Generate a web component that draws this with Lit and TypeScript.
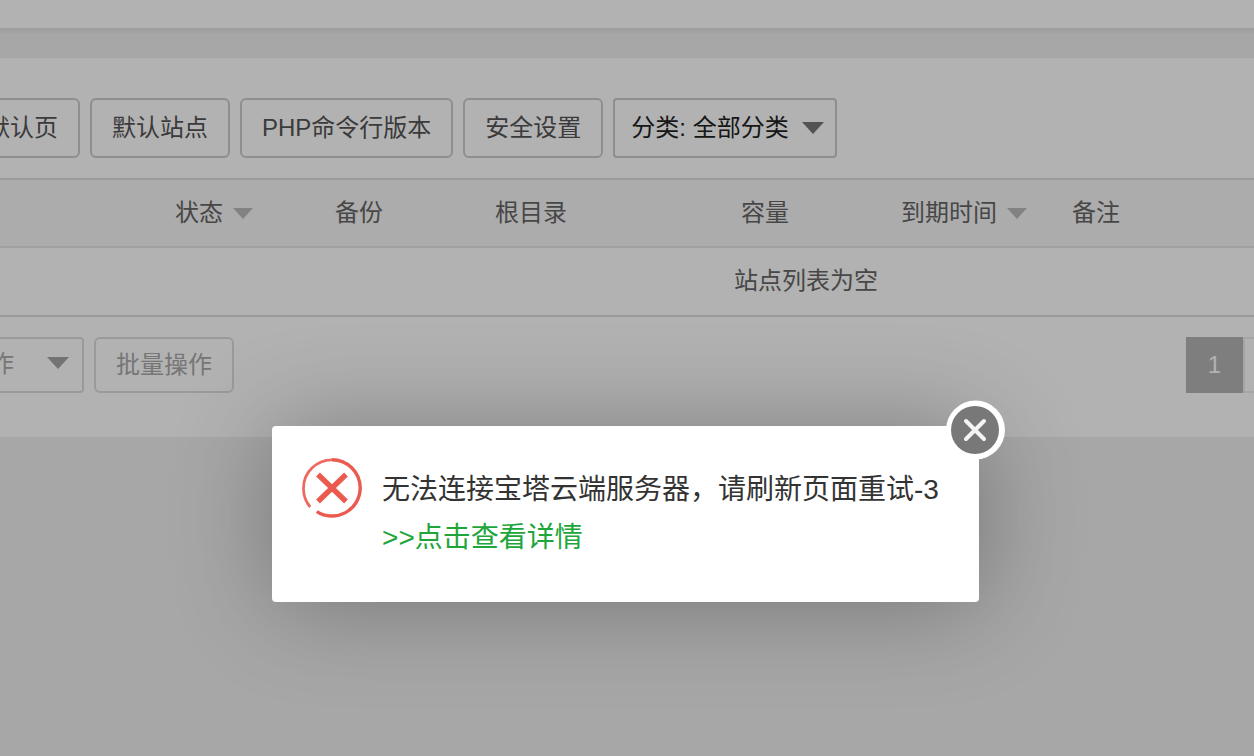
import { LitElement, html, css, nothing } from "lit";
import { customElement, property, state } from "lit/decorators.js";

const triangle = (cls: string) => html`
  <svg class=${cls} viewBox="0 0 22 12" aria-hidden="true">
    <path d="M0 0H22L11 12Z" fill="currentColor"></path>
  </svg>
`;

interface Column {
  label: string;
  cls: string;
  sortable?: boolean;
}

const COLUMNS: Column[] = [
  { label: "", cls: "lead" },
  { label: "状态", cls: "normal", sortable: true },
  { label: "备份", cls: "normal" },
  { label: "根目录", cls: "path" },
  { label: "容量", cls: "normal" },
  { label: "到期时间", cls: "expiry", sortable: true },
  { label: "备注", cls: "rest" },
];

@customElement("select-box")
class SelectBox extends LitElement {
  @property() label = "";
  @property() option = "";
  @property({ type: Boolean }) disabled = false;

  static styles = css`
    :host {
      display: block;
      position: relative;
      flex: none;
    }
    .select {
      display: block;
      appearance: none;
      box-sizing: border-box;
      width: 100%;
      height: 100%;
      margin: 0;
      padding: 0 44px 0 16px;
      border: 2px solid #ccc;
      border-radius: 4px;
      background: #fff;
      color: #222;
      font: inherit;
      opacity: 1;
    }
    .select:disabled {
      padding: 0 40px 3px 18px;
      border-color: #ddd;
      color: #aaa;
    }
    .arrow {
      position: absolute;
      top: 50%;
      right: 13px;
      width: 22px;
      height: 12px;
      margin-top: -6px;
      color: #777;
      pointer-events: none;
    }
    .muted {
      right: 15px;
      margin-top: -8px;
      color: #a5a5a5;
    }
  `;

  render() {
    return html`
      <select class="select" aria-label=${this.label} ?disabled=${this.disabled}>
        <option>${this.option}</option>
      </select>
      ${triangle(this.disabled ? "arrow muted" : "arrow")}
    `;
  }
}

@customElement("site-table")
class SiteTable extends LitElement {
  static styles = css`
    :host {
      display: block;
    }
    .table {
      width: calc(100% + 358px);
      border-collapse: separate;
      border-spacing: 0;
      table-layout: fixed;
      border-top: 2px solid #ddd;
    }
    .th {
      height: 66px;
      padding: 0 0 0 16px;
      border-bottom: 2px solid #e6e6e6;
      background: #f6f6f6;
      color: #666;
      font-weight: 400;
      text-align: left;
      white-space: nowrap;
    }
    .lead {
      width: 143px;
    }
    .normal {
      width: 144px;
    }
    .path {
      width: 230px;
    }
    .expiry {
      width: 155px;
    }
    .sort {
      display: inline-flex;
      align-items: center;
      gap: 10px;
      padding: 0;
      border: 0;
      background: none;
      color: inherit;
      font: inherit;
    }
    .sort-arrow {
      width: 20px;
      height: 11px;
      color: #bbb;
    }
    .empty {
      height: 65px;
      padding: 0 0 2px;
      border-bottom: 2px solid #ddd;
      color: #666;
      text-align: center;
    }
  `;

  render() {
    return html`
      <table class="table">
        <thead>
          <tr>
            ${COLUMNS.map(
              (c) => html`<th class="th ${c.cls}" scope="col">
                ${c.sortable
                  ? html`<button class="sort" type="button">${c.label}${triangle("sort-arrow")}</button>`
                  : c.label}
              </th>`
            )}
          </tr>
        </thead>
        <tbody>
          <tr>
            <td class="empty" colspan=${COLUMNS.length}>站点列表为空</td>
          </tr>
        </tbody>
      </table>
    `;
  }
}

@customElement("error-dialog")
class ErrorDialog extends LitElement {
  static styles = css`
    :host {
      display: block;
      position: relative;
      box-sizing: border-box;
      padding: 40px 40px 40px 110px;
      border-radius: 4px;
      background: #fff;
      box-shadow: 2px 2px 100px rgba(0, 0, 0, 0.3);
      color: #333;
      font-size: 28px;
      line-height: 48px;
    }
    .icon {
      position: absolute;
      top: 32px;
      left: 30px;
      width: 60px;
      height: 60px;
    }
    .message {
      margin: 0;
    }
    .link {
      color: #20a53a;
      text-decoration: none;
    }
    .close {
      position: absolute;
      top: -26px;
      right: -27px;
      width: 60px;
      height: 60px;
      padding: 0;
      border: 0;
      background: none;
    }
    .close-icon {
      display: block;
      width: 60px;
      height: 60px;
    }
  `;

  private close() {
    this.dispatchEvent(new CustomEvent("dismiss"));
  }

  render() {
    return html`
      <svg class="icon" viewBox="0 0 60 60" fill="none" stroke="#ea5a4f" aria-hidden="true">
        <path d="M14.8 53.6A28.2 28.2 0 0 0 58.2 30A28.2 28.2 0 0 0 30 1.8" stroke-width="3.4"></path>
        <path d="M30 1.8A28.4 28.4 0 0 0 1.5 30A28.4 28.4 0 0 0 8.2 49" stroke-width="2.8" stroke-opacity="0.9"></path>
        <path d="M16 16.5L44 43.5M44 16.5L16 43.5" stroke-width="5.4"></path>
      </svg>
      <p class="message">
        无法连接宝塔云端服务器，请刷新页面重试-3<br />
        <a class="link" href="#">&gt;&gt;点击查看详情</a>
      </p>
      <button class="close" type="button" aria-label="关闭" @click=${this.close}>
        <svg class="close-icon" viewBox="0 0 60 60" aria-hidden="true">
          <circle cx="29.5" cy="30" r="29.5" fill="#fff"></circle>
          <circle cx="29" cy="30" r="24" fill="#787878"></circle>
          <path d="M20 21L38 39M38 21L20 39" stroke="#f4f4f4" stroke-width="4" stroke-linecap="round"></path>
        </svg>
      </button>
    `;
  }
}

@customElement("app-root")
class AppRoot extends LitElement {
  @state() private dialogOpen = true;

  static styles = css`
    :host {
      display: block;
      position: relative;
      min-height: 100vh;
      overflow: hidden;
      background: #f0f0f0;
      font-family: "Liberation Sans", "Noto Sans CJK SC", sans-serif;
      font-size: 24px;
      line-height: 36px;
    }
    .topbar {
      height: 28px;
      margin: 0 -10px;
      background: #fff;
      box-shadow: 0 4px 4px rgba(0, 0, 0, 0.06);
    }
    .panel {
      margin-top: 30px;
      padding: 40px 0 44px;
      background: #fff;
    }
    .toolbar {
      display: flex;
      gap: 10px;
      height: 60px;
      margin: 0 0 20px -84px;
    }
    .btn {
      flex: none;
      box-sizing: border-box;
      padding: 0 20px;
      border: 2px solid #ccc;
      border-radius: 6px;
      background: #fff;
      color: #555;
      font: inherit;
      white-space: nowrap;
    }
    .btn:disabled {
      border-color: #ddd;
      color: #aaa;
    }
    .category {
      width: 224px;
    }
    .footer {
      display: flex;
      gap: 10px;
      height: 56px;
      margin: 20px -46px 0 -174px;
    }
    .batch {
      width: 258px;
    }
    .pager {
      display: flex;
      margin-left: auto;
    }
    .page {
      display: flex;
      align-items: center;
      justify-content: center;
      box-sizing: border-box;
      width: 57px;
      border: 2px solid #ececec;
    }
    .current {
      border-color: #b5b5b5;
      background: #b5b5b5;
      color: #fff;
    }
    .shade {
      position: absolute;
      inset: 0;
      display: flex;
      align-items: flex-start;
      justify-content: center;
      padding: 426px 3px 0 0;
      background: rgba(0, 0, 0, 0.3);
    }
  `;

  render() {
    return html`
      <header class="topbar"></header>
      <main class="panel">
        <div class="toolbar">
          <button class="btn" type="button">修改默认页</button>
          <button class="btn" type="button">默认站点</button>
          <button class="btn" type="button">PHP命令行版本</button>
          <button class="btn" type="button">安全设置</button>
          <select-box class="category" label="分类" option="分类: 全部分类"></select-box>
        </div>
        <site-table></site-table>
        <div class="footer">
          <select-box class="batch" label="批量操作" option="请选择批量操作" disabled></select-box>
          <button class="btn" type="button" disabled>批量操作</button>
          <nav class="pager" aria-label="分页">
            <span class="page current">1</span>
            <span class="page"></span>
          </nav>
        </div>
      </main>
      ${this.dialogOpen
        ? html`<div class="shade">
            <error-dialog
              role="alertdialog"
              aria-label="错误"
              @dismiss=${() => (this.dialogOpen = false)}
            ></error-dialog>
          </div>`
        : nothing}
    `;
  }
}
